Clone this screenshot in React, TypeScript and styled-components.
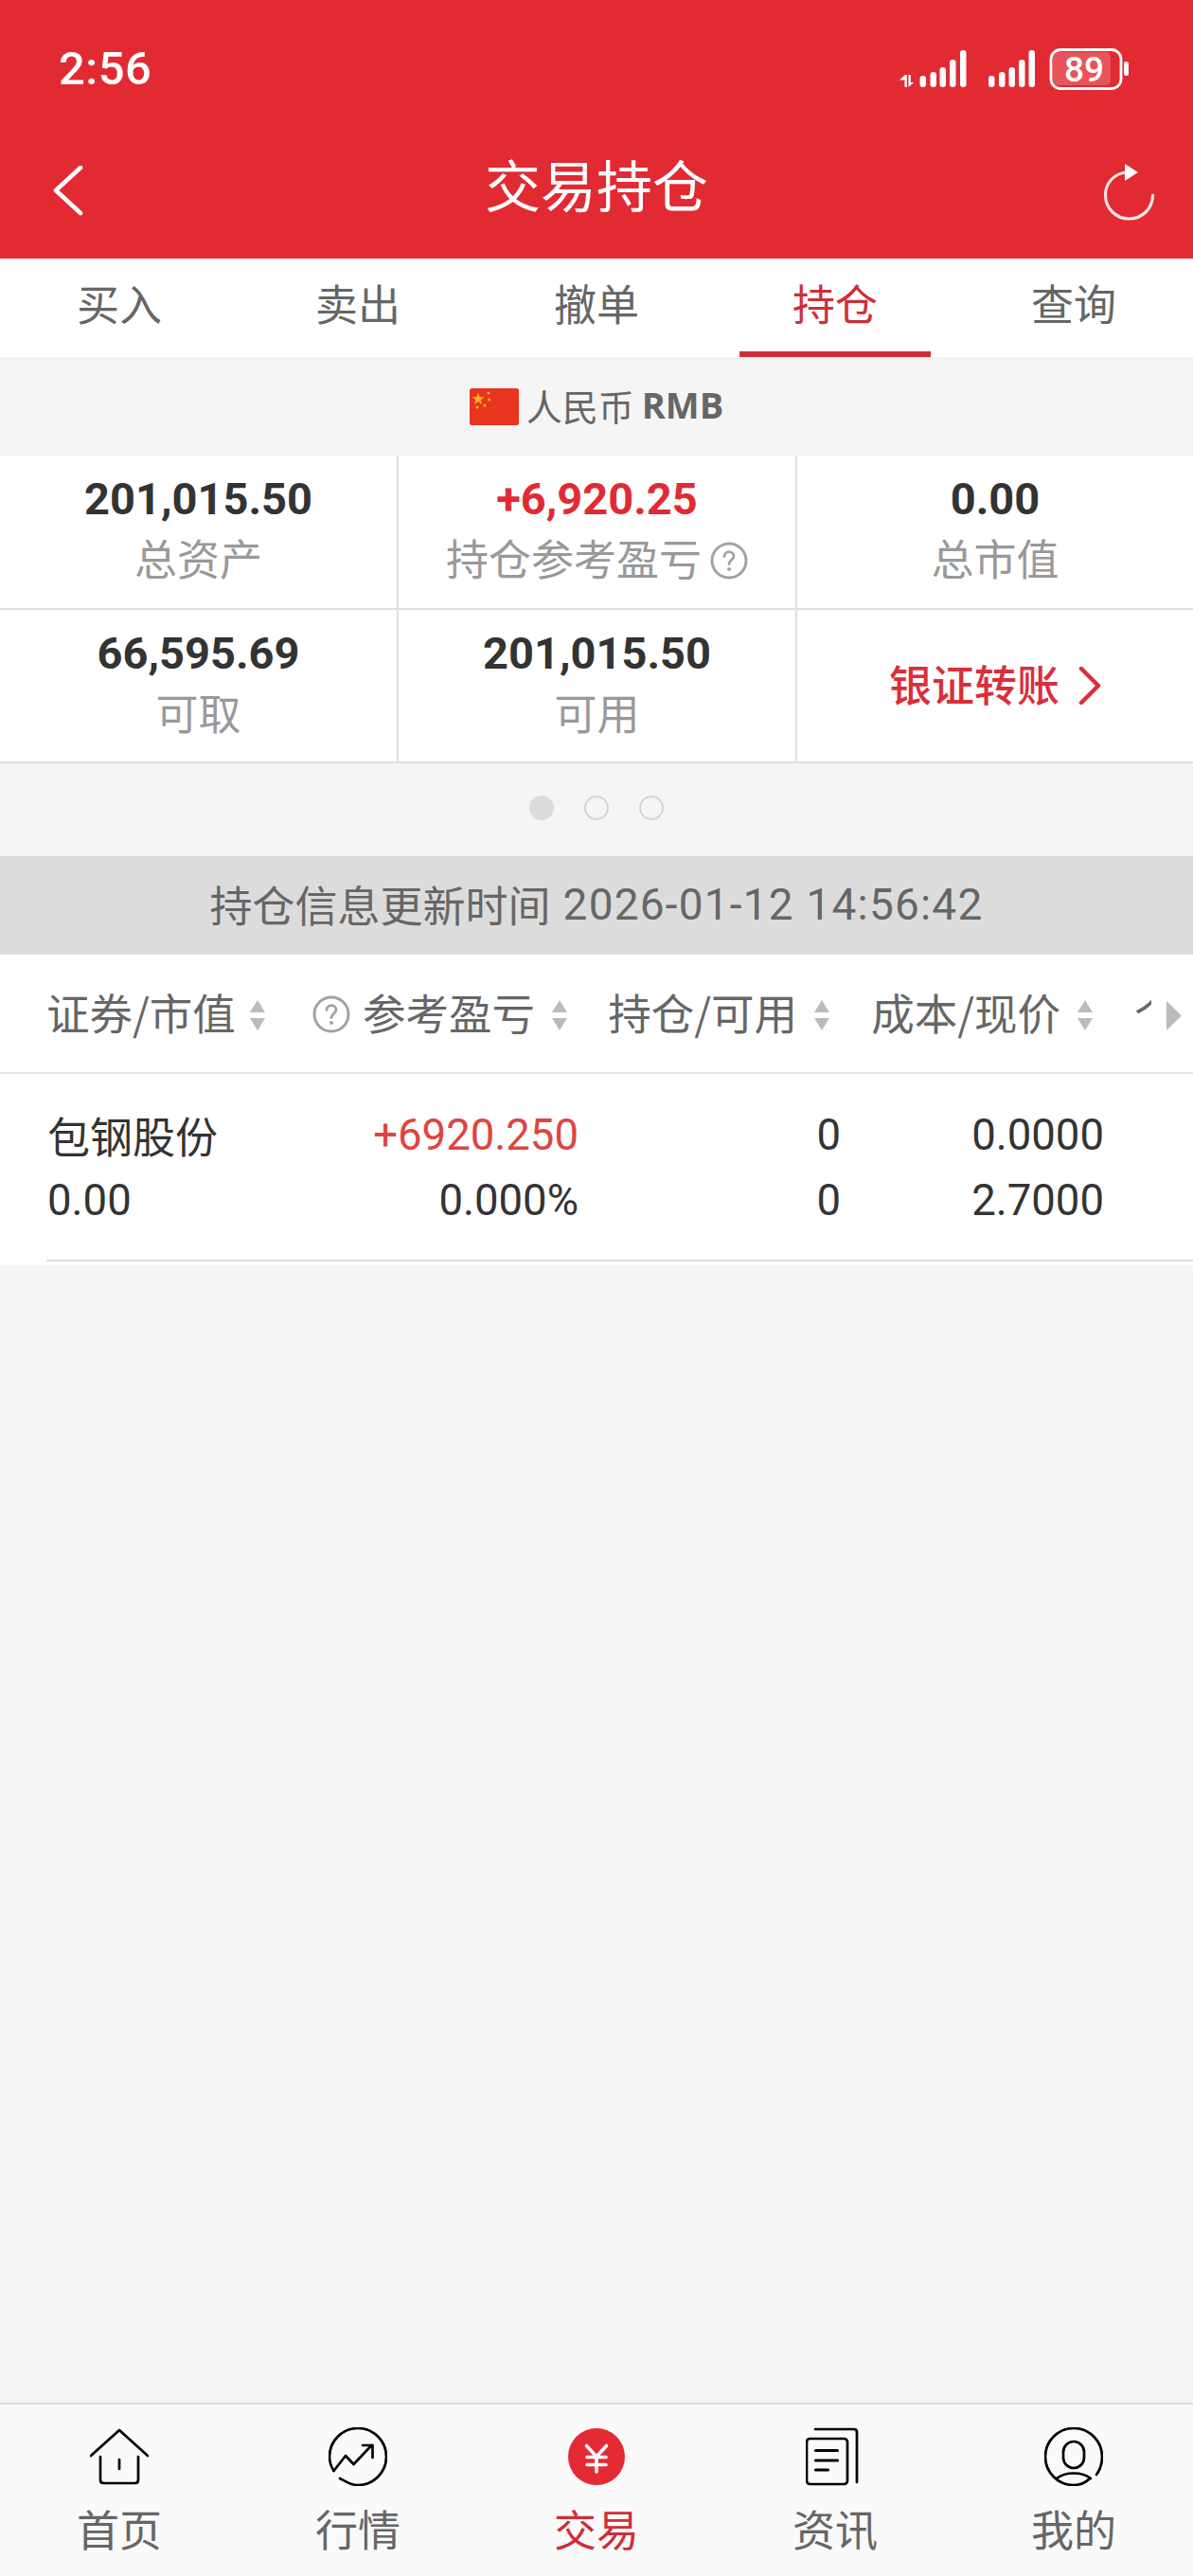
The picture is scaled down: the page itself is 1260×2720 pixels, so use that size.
import React from 'react';
import styled, { createGlobalStyle } from 'styled-components';

const RED = '#e12a32';
const TAB_RED = '#cf2e39';
const NUM_FONT = `Roboto, "Noto Sans CJK SC", sans-serif`;

const GlobalStyle = createGlobalStyle`
    html, body {
        margin: 0;
        padding: 0;
        background: #f5f5f5;
    }
    * {
        box-sizing: border-box;
    }
`;

const Page = styled.div`
    width: 1260px;
    height: 2720px;
    display: flex;
    flex-direction: column;
    background: #f5f5f5;
    font-family: "Noto Sans CJK SC", Roboto, sans-serif;
    overflow: hidden;
`;

const Header = styled.header`
    height: 273px;
    flex: none;
    background: ${RED};
    color: #fff;
    display: flex;
    flex-direction: column;
`;
const StatusBar = styled.div`
    height: 146px;
    padding: 46px 0 0 62px;
    display: flex;
    justify-content: space-between;
    align-items: flex-start;
`;
const Clock = styled.span`
    font-family: ${NUM_FONT};
    font-size: 49px;
    line-height: 54px;
    font-weight: 500;
    letter-spacing: 0.5px;
`;
const StatusIcons = styled.svg`
    margin: 5px 65px 0 0;
    flex: none;
`;
const NavRow = styled.div`
    flex: 1;
    display: flex;
    align-items: flex-start;
    justify-content: space-between;
    padding: 0 38px 0 54px;
    position: relative;
`;
const BackIcon = styled.svg`
    margin-top: 29px;
`;
const RefreshIcon = styled.svg`
    margin-top: 27px;
`;
const Title = styled.h1`
    position: absolute;
    left: 0;
    right: 0;
    top: 11px;
    margin: 0;
    text-align: center;
    font-size: 59px;
    line-height: 74px;
    font-weight: 400;
`;

const Tabs = styled.nav`
    height: 104px;
    flex: none;
    background: #fff;
    display: grid;
    grid-template-columns: repeat(5, 252px);
`;
const Tab = styled.div<{ $active?: boolean }>`
    position: relative;
    text-align: center;
    font-size: 45px;
    line-height: 58px;
    padding-top: 18px;
    color: ${(p) => (p.$active ? TAB_RED : '#666')};
    &::after {
        content: '';
        display: ${(p) => (p.$active ? 'block' : 'none')};
        position: absolute;
        left: 25px;
        right: 25px;
        bottom: 0;
        height: 6px;
        background: ${TAB_RED};
    }
`;

const Currency = styled.div`
    height: 104px;
    flex: none;
    display: flex;
    align-items: center;
    justify-content: center;
    gap: 8px;
    color: #666;
    font-size: 38px;
`;
const CurrencyText = styled.span`
    margin-bottom: 4px;
`;
const CurrencyCode = styled.span`
    font-family: "Open Sans", ${NUM_FONT};
    font-weight: 700;
    font-size: 38px;
    line-height: 50px;
    margin-bottom: 4px;
`;

const Summary = styled.section`
    flex: none;
    display: grid;
    grid-template-columns: 421px 421px 418px;
    grid-template-rows: 163px 162px;
    background: #fff;
`;
const Cell = styled.div`
    border-right: 2px solid #e0e0e0;
    border-bottom: 2px solid #e0e0e0;
    display: flex;
    flex-direction: column;
    align-items: center;
    padding-top: 18px;
    &:nth-child(3n) {
        border-right: none;
    }
`;
const Amount = styled.div<{ $red?: boolean }>`
    font-family: ${NUM_FONT};
    font-size: 47px;
    line-height: 56px;
    font-weight: 700;
    color: ${(p) => (p.$red ? '#e02b35' : '#333')};
`;
const AmountLabel = styled.div`
    display: flex;
    align-items: center;
    gap: 9px;
    margin-top: 4px;
    font-size: 45px;
    line-height: 60px;
    color: #999;
    svg {
        margin-top: 5px;
    }
`;
const TransferCell = styled(Cell)`
    flex-direction: row;
    justify-content: center;
    padding: 0;
    gap: 20px;
    color: #d92f3b;
    font-size: 45px;
    font-weight: 500;
`;
const TransferText = styled.span`
    margin-bottom: 6px;
`;

const Dots = styled.div`
    height: 98px;
    flex: none;
    display: flex;
    align-items: center;
    justify-content: center;
    gap: 32px;
    padding-bottom: 4px;
`;
const Dot = styled.span<{ $on?: boolean }>`
    width: 26px;
    height: 26px;
    border-radius: 50%;
    border: 2px solid ${(p) => (p.$on ? '#dcdcdc' : '#d4d4d4')};
    background: ${(p) => (p.$on ? '#dcdcdc' : 'transparent')};
`;

const UpdateBar = styled.div`
    height: 104px;
    flex: none;
    background: #dcdcdc;
    color: #666;
    display: flex;
    align-items: center;
    justify-content: center;
    gap: 13px;
    font-size: 45px;
    padding-bottom: 3px;
`;
const UpdateTime = styled.span`
    font-family: ${NUM_FONT};
    font-size: 46px;
    letter-spacing: 1.2px;
`;

const Table = styled.section`
    flex: none;
    background: #fff;
    height: 328px;
    position: relative;
`;
const HeadRow = styled.div`
    height: 126px;
    padding: 0 0 4px 49px;
    border-bottom: 2px solid #e2e2e2;
    display: grid;
    grid-template-columns: 271px 290px 277px 278px 51px;
    color: #666;
    font-size: 45.5px;
`;
const HeadCell = styled.div<{ $left?: boolean }>`
    display: flex;
    align-items: center;
    justify-content: ${(p) => (p.$left ? 'flex-start' : 'flex-end')};
    padding-right: ${(p) => (p.$left ? 0 : 11)}px;
    gap: ${(p) => (p.$left ? 15 : 18)}px;
    white-space: nowrap;
`;
const HeadHelp = styled.span`
    display: flex;
    align-items: center;
    gap: 13px;
    svg {
        margin-top: 5px;
    }
`;
const SortIcon = styled.svg`
    margin-top: 8px;
    flex: none;
`;
const ClippedHead = styled.div`
    overflow: hidden;
    display: flex;
    align-items: center;
    padding-left: 33px;
    white-space: nowrap;
`;
const MoreArrow = styled.svg`
    position: absolute;
    left: 1232px;
    top: 49px;
`;
const Row = styled.div`
    margin-left: 49px;
    height: 198px;
    border-bottom: 2px solid #dedede;
    padding: 30px 0 0 1px;
    display: grid;
    grid-template-columns: 271px 290px 277px 278px;
    grid-auto-rows: 69px;
    font-family: ${NUM_FONT};
    font-size: 45.5px;
    color: #333;
`;
const Value = styled.div<{ $left?: boolean; $red?: boolean }>`
    text-align: ${(p) => (p.$left ? 'left' : 'right')};
    color: ${(p) => (p.$red ? '#e0443e' : '#333')};
    line-height: 69px;
    white-space: nowrap;
`;
const StockName = styled(Value)`
    font-family: "Noto Sans CJK SC", sans-serif;
    font-size: 45px;
`;

const Spacer = styled.div`
    flex: 1;
`;

const BottomNav = styled.nav`
    height: 183px;
    flex: none;
    background: #fafafa;
    border-top: 2px solid #dcdcdc;
    display: grid;
    grid-template-columns: repeat(5, 252px);
`;
const NavItem = styled.div<{ $active?: boolean }>`
    display: flex;
    flex-direction: column;
    align-items: center;
    padding-top: 24px;
    gap: 20px;
    font-size: 45px;
    line-height: 50px;
    color: ${(p) => (p.$active ? TAB_RED : '#666')};
`;

function HelpIcon({ size, color }: { size: number; color: string }) {
    return (
        <svg width={size} height={size} viewBox="0 0 40 40" fill="none">
            <circle cx="20" cy="20" r="18" stroke={color} strokeWidth="3" />
            <path d="M15 15.5c0-3 2.2-4.8 5-4.8s5 1.8 5 4.6c0 3.800-5 4.200-5 8.200" stroke={color} strokeWidth="2.8" strokeLinecap="round" />
            <circle cx="20" cy="29" r="2" fill={color} />
        </svg>
    );
}

function SortArrows() {
    return (
        <SortIcon width="16" height="32" viewBox="0 0 16 32" fill="#bbb">
            <path d="M8 0l8 13H0z" />
            <path d="M0 19h16L8 32z" />
        </SortIcon>
    );
}

// signal bars, left to right, first card then second card
const signalBars = [
    { x: 21.5, h: 12 },
    { x: 32.5, h: 16 },
    { x: 42.5, h: 21 },
    { x: 53, h: 29 },
    { x: 64, h: 39 },
    { x: 94, h: 12 },
    { x: 105, h: 16 },
    { x: 115.5, h: 21 },
    { x: 126, h: 29 },
    { x: 136.5, h: 39 },
];

function StatusGlyphs() {
    return (
        <StatusIcons width="245" height="44" viewBox="0 0 245 44" fill="#fff">
            <path d="M5.5 41V33.5H0L6 28h1.800v13zM9.500 28h2.300v8H15L9.500 41z" />
            {signalBars.map((b) => (
                <rect key={b.x} x={b.x} y={41 - b.h} width="6.5" height={b.h} rx="3" />
            ))}
            <rect x="162" y="4" width="61" height="35" rx="5" fillOpacity="0.2" />
            <rect x="160" y="1.5" width="74" height="41" rx="10" fill="none" stroke="#fff" strokeWidth="2.8" />
            <rect x="237" y="14" width="5" height="15" rx="2.5" />
            <text x="195" y="35" textAnchor="middle" fontFamily="Roboto, sans-serif" fontSize="37" fontWeight="500">89</text>
        </StatusIcons>
    );
}

function HomeIcon() {
    return (
        <svg width="62" height="62" viewBox="0 0 62 62" fill="none" stroke="#000" strokeWidth="2.7" strokeLinecap="round" strokeLinejoin="round">
            <path d="M1 30L31 3l30 27" />
            <path d="M11 31v24.500c0 2.200 1.300 3.500 3.500 3.500h33c2.200 0 3.500-1.300 3.500-3.500V31" />
            <path d="M31 34v10" />
        </svg>
    );
}

function MarketIcon() {
    return (
        <svg width="62" height="62" viewBox="0 0 62 62" fill="none" stroke="#000" strokeWidth="2.7" strokeLinecap="round" strokeLinejoin="round">
            <path d="M5.500 46C2.500 41.500 1 36.500 1 31 1 14.500 14.500 1 31 1s30 13.500 30 30-13.500 30-30 30c-6 0-8.500-1.500-19-7" />
            <path d="M5.500 46L18 30l8.500 9 19-20" />
            <path d="M36 19h10.500v13" />
        </svg>
    );
}

function TradeIcon() {
    return (
        <svg width="62" height="62" viewBox="0 0 62 62" fill="none">
            <circle cx="31" cy="31" r="30" fill="#e32a34" />
            <g stroke="#fff" strokeWidth="3.6" strokeLinecap="round">
                <path d="M20.500 19.500L31 31l10.500-11.500" />
                <path d="M31 31v16" />
                <path d="M21 31.500h20M21 39.500h20" />
            </g>
        </svg>
    );
}

function NewsIcon() {
    return (
        <svg width="62" height="62" viewBox="0 0 62 62" fill="none" stroke="#000" strokeWidth="2.7" strokeLinecap="round" strokeLinejoin="round">
            <path d="M10 2h41c2 0 3 1 3 3v53" />
            <rect x="1" y="12" width="43" height="48" rx="3.5" />
            <path d="M10.500 24.500h23M10.500 35h23M10.500 45h13" strokeWidth="3.2" />
        </svg>
    );
}

function MineIcon() {
    return (
        <svg width="62" height="62" viewBox="0 0 62 62" fill="none" stroke="#000" strokeWidth="2.7" strokeLinecap="round" strokeLinejoin="round">
            <path d="M55 50C59 44.500 61 38 61 31 61 14.500 47.500 1 31 1S1 14.500 1 31s13.500 30 30 30c9 0 14-4 17-7" />
            <rect x="20" y="15" width="22" height="28" rx="11" />
            <path d="M13 54c5-4 11-5.500 18-5.500s13 1.500 18 5.500" />
        </svg>
    );
}

const tabs = ['买入', '卖出', '撤单', '持仓', '查询'];
const navItems = [
    { label: '首页', icon: <HomeIcon /> },
    { label: '行情', icon: <MarketIcon /> },
    { label: '交易', icon: <TradeIcon />, active: true },
    { label: '资讯', icon: <NewsIcon /> },
    { label: '我的', icon: <MineIcon /> },
];

function App() {
    return (
        <Page>
            <GlobalStyle />
            <Header>
                <StatusBar>
                    <Clock>2:56</Clock>
                    <StatusGlyphs />
                </StatusBar>
                <NavRow>
                    <BackIcon width="36" height="54" viewBox="0 0 36 54" fill="none" stroke="#fff" strokeWidth="4.5" strokeLinecap="round" strokeLinejoin="round">
                        <path d="M31 2L5 26l26 24" />
                    </BackIcon>
                    <Title>交易持仓</Title>
                    <RefreshIcon width="56" height="62" viewBox="0 0 56 62" fill="none">
                        <path d="M24 9C11 10 1.500 20 1.500 33c0 14 11 25 25 25s25-11 25-25" stroke="#fff" strokeOpacity="0.88" strokeWidth="3.2" strokeLinecap="round" />
                        <path d="M22 0l14 9-14 9z" fill="#fff" />
                    </RefreshIcon>
                </NavRow>
            </Header>

            <Tabs>
                {tabs.map((t) => (
                    <Tab key={t} $active={t === '持仓'}>{t}</Tab>
                ))}
            </Tabs>

            <Currency>
                <svg width="52" height="39" viewBox="0 0 52 39">
                    <rect width="52" height="39" rx="2.5" fill="#e8351f" />
                    <path d="M9 4.500l1.700 4.600 4.800.1-3.800 3 1.400 4.700-4.100-2.800-4 2.800 1.400-4.700-3.900-3 4.900-.1z" fill="#f6b21c" />
                    <g fill="#f6b21c">
                        <circle cx="20" cy="5" r="1.5" />
                        <circle cx="20.5" cy="12" r="1.5" />
                        <circle cx="16" cy="18" r="1.5" />
                        <circle cx="8" cy="20" r="1.5" />
                    </g>
                </svg>
                <CurrencyText>人民币</CurrencyText>
                <CurrencyCode>RMB</CurrencyCode>
            </Currency>

            <Summary>
                <Cell>
                    <Amount>201,015.50</Amount>
                    <AmountLabel>总资产</AmountLabel>
                </Cell>
                <Cell>
                    <Amount $red>+6,920.25</Amount>
                    <AmountLabel>
                        持仓参考盈亏
                        <HelpIcon size={40} color="#a2a2a2" />
                    </AmountLabel>
                </Cell>
                <Cell>
                    <Amount>0.00</Amount>
                    <AmountLabel>总市值</AmountLabel>
                </Cell>
                <Cell>
                    <Amount>66,595.69</Amount>
                    <AmountLabel>可取</AmountLabel>
                </Cell>
                <Cell>
                    <Amount>201,015.50</Amount>
                    <AmountLabel>可用</AmountLabel>
                </Cell>
                <TransferCell>
                    <TransferText>银证转账</TransferText>
                    <svg width="24" height="40" viewBox="0 0 24 40" fill="none" stroke="#d92f3b" strokeWidth="4.5" strokeLinecap="round" strokeLinejoin="round">
                        <path d="M3 2l18 18L3 38" />
                    </svg>
                </TransferCell>
            </Summary>

            <Dots>
                <Dot $on />
                <Dot />
                <Dot />
            </Dots>

            <UpdateBar>
                持仓信息更新时间
                <UpdateTime>2026-01-12 14:56:42</UpdateTime>
            </UpdateBar>

            <Table>
                <HeadRow>
                    <HeadCell $left>证券/市值<SortArrows /></HeadCell>
                    <HeadCell>
                        <HeadHelp>
                            <HelpIcon size={40} color="#a2a2a2" />
                            参考盈亏
                        </HeadHelp>
                        <SortArrows />
                    </HeadCell>
                    <HeadCell>持仓/可用<SortArrows /></HeadCell>
                    <HeadCell>成本/现价<SortArrows /></HeadCell>
                    <ClippedHead>个股仓位</ClippedHead>
                </HeadRow>
                <MoreArrow width="16" height="31" viewBox="0 0 16 31" fill="#bbb">
                    <path d="M0 0l16 15.500L0 31z" />
                </MoreArrow>
                <Row>
                    <StockName $left>包钢股份</StockName>
                    <Value $red>+6920.250</Value>
                    <Value>0</Value>
                    <Value>0.0000</Value>
                    <Value $left>0.00</Value>
                    <Value>0.000%</Value>
                    <Value>0</Value>
                    <Value>2.7000</Value>
                </Row>
            </Table>

            <Spacer />

            <BottomNav>
                {navItems.map((n) => (
                    <NavItem key={n.label} $active={n.active}>
                        {n.icon}
                        {n.label}
                    </NavItem>
                ))}
            </BottomNav>
        </Page>
    );
}

export default App;
